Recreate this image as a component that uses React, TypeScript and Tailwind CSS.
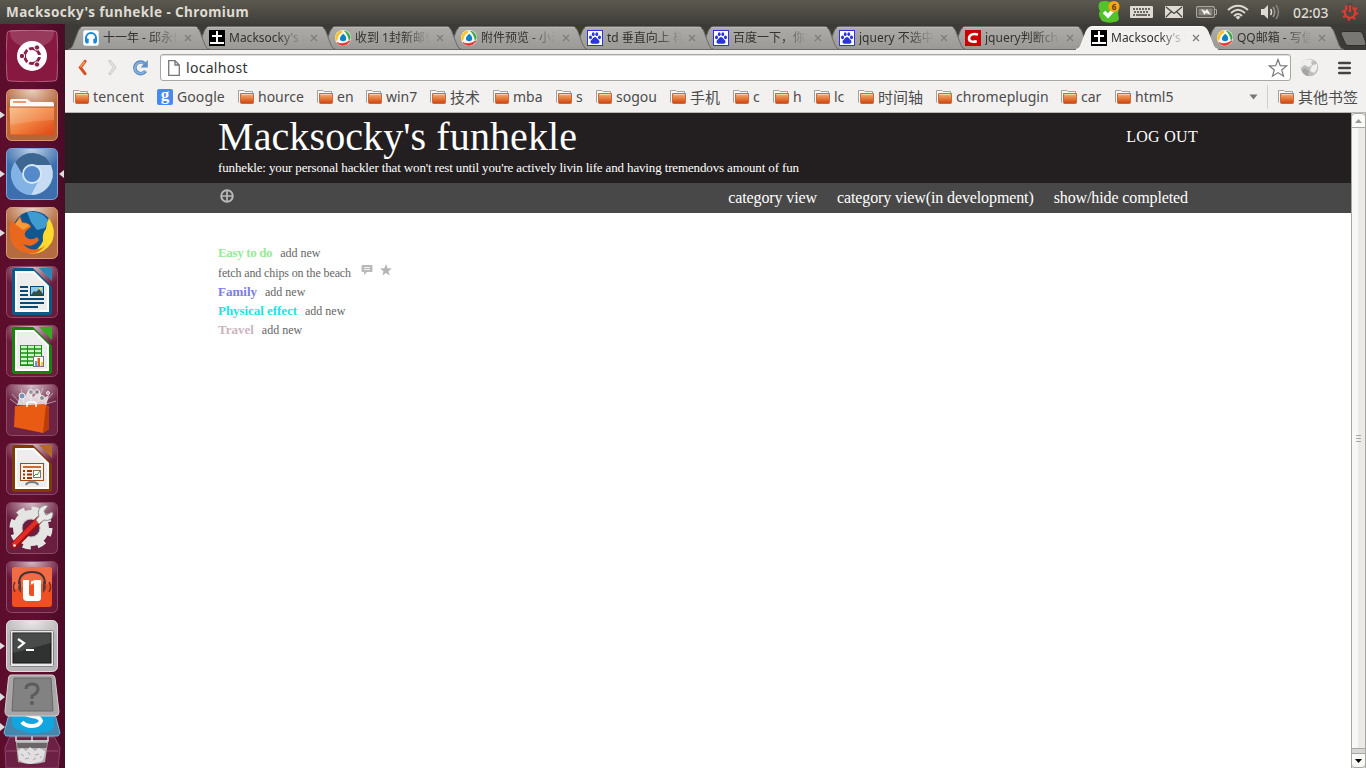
import React from "react";

const UI = "font-['Noto_Sans','Noto_Sans_CJK_SC',sans-serif]";

/* ---------- small icons ---------- */

function Headphones() {
  return (
    <svg width="16" height="16" viewBox="0 0 16 16">
      <rect x="0.5" y="0.5" width="15" height="15" rx="2" fill="#fff" stroke="#dceaf5" />
      <path d="M3 12V8a5 5 0 0 1 10 0v4" fill="none" stroke="#1c87d6" strokeWidth="2" />
      <rect x="2.5" y="8.5" width="3.2" height="5" rx="1" fill="#1c87d6" />
      <rect x="10.3" y="8.5" width="3.2" height="5" rx="1" fill="#1c87d6" />
    </svg>
  );
}
function Earth() {
  return (
    <svg width="16" height="16" viewBox="0 0 16 16">
      <rect width="16" height="16" fill="#000" />
      <path d="M7 1h2v4h4v2H9v5h6v2H1v-2h6V7H3V5h4z" fill="#fff" />
    </svg>
  );
}
function QQMail() {
  return (
    <svg width="16" height="16" viewBox="0 0 16 16">
      <circle cx="8" cy="8" r="8" fill="#f6f8f4" />
      <path d="M1 11.500A7.600 7.600 0 0 1 7.500 .5L7 3A7 7 0 0 0 2.800 9z" fill="#f7c62c" />
      <path d="M8.500 .5A7.600 7.600 0 0 1 15.500 8.500l-1.600 2.400C13.400 7 12 3.500 8.500 .5z" fill="#3aa843" />
      <path d="M2 12.500c3 1.800 8 1.600 12.800-1.700A7.500 7.500 0 0 1 2 12.500z" fill="#e5322d" stroke="#e5322d" strokeWidth=".8" />
      <path d="M8.200 3.800c2 1.500 3.300 3.500 3 5.200-.3 1.500-1.600 2.300-3.200 2.200-1.800 0-3-1-3.100-2.400 0-1.800 1.500-3.500 3.300-5z" fill="#0b82c4" />
    </svg>
  );
}
function Baidu() {
  return (
    <svg width="16" height="16" viewBox="0 0 16 16">
      <rect x=".5" y=".5" width="15" height="15" fill="#fff" stroke="#2a35dc" />
      <g fill="#2a35dc">
        <ellipse cx="3.500" cy="7.300" rx="1.500" ry="1.900" />
        <ellipse cx="6.200" cy="4.200" rx="1.400" ry="1.900" />
        <ellipse cx="9.800" cy="4.200" rx="1.400" ry="1.900" />
        <ellipse cx="12.500" cy="7.300" rx="1.500" ry="1.900" />
        <path d="M8 7c1.300 0 1.900 1.300 2.900 2.300 1.200 1.100 2 1.900 1.500 3.300-.6 1.600-2.600 1.200-4.400 1.100-1.800.1-3.800.5-4.400-1.100-.5-1.400.3-2.200 1.500-3.300C6.100 8.300 6.700 7 8 7z" />
      </g>
    </svg>
  );
}
function Csdn() {
  return (
    <svg width="16" height="16" viewBox="0 0 16 16">
      <rect width="16" height="16" fill="#cb0000" />
      <path d="M13 4.600C9 3.400 4.500 4 4 8c-.3 3.600 3.500 4.300 7.800 3.200" fill="none" stroke="#fff" strokeWidth="2.500" />
    </svg>
  );
}
function Folder() {
  return (
    <svg className="shrink-0" width="16" height="16" viewBox="0 0 16 16">
      <defs>
        <linearGradient id="fold" x1="0" y1="0" x2="0" y2="1">
          <stop offset="0" stopColor="#f3b57c" />
          <stop offset=".45" stopColor="#e58142" />
          <stop offset="1" stopColor="#d0410f" />
        </linearGradient>
      </defs>
      <path d="M.5 13.500V1.500H6l1 1h7.500V5" fill="#fafafa" stroke="#a3a19d" />
      <path d="M2.500 4.500h13v9q0 1-1 1h-11q-1 0-1-1z" fill="url(#fold)" stroke="#cd6a3a" />
      <path d="M3.500 5.500h11" stroke="#f8cfa6" />
    </svg>
  );
}
function Close() {
  return (
    <svg width="8" height="8" viewBox="0 0 8 8">
      <path d="M1 1l6 6M7 1L1 7" stroke="#7d7d7a" strokeWidth="1.300" />
    </svg>
  );
}

/* ---------- tab strip ---------- */

const tabs: { icon: () => React.JSX.Element; text: string; z: string; active?: boolean }[] = [
  { icon: Headphones, text: "十一年 - 邱永传", z: "z-10" },
  { icon: Earth, text: "Macksocky's f", z: "z-9" },
  { icon: QQMail, text: "收到 1封新邮件", z: "z-8" },
  { icon: QQMail, text: "附件预览 - 小满", z: "z-7" },
  { icon: Baidu, text: "td 垂直向上 样", z: "z-6" },
  { icon: Baidu, text: "百度一下，你就", z: "z-5" },
  { icon: Baidu, text: "jquery 不选中", z: "z-4" },
  { icon: Csdn, text: "jquery判断che", z: "z-3" },
  { icon: Earth, text: "Macksocky's f", z: "z-20", active: true },
  { icon: QQMail, text: "QQ邮箱 - 写信", z: "z-1" },
];

function Tab({ icon: Icon, text, z, active }: (typeof tabs)[number]) {
  return (
    <div className={`relative -mr-4 h-6 w-[142px] shrink-0 ${z}`}>
      <svg className="absolute inset-0" width="142" height="24" viewBox="0 0 142 24">
        <defs>
          <linearGradient id="tabFill" x1="0" y1="0" x2="0" y2="1">
            <stop offset="0" stopColor="#adaca9" />
            <stop offset="1" stopColor="#9a9996" />
          </linearGradient>
        </defs>
        <path
          d="M0 23.500C3 23 4 21 5 19L10.500 4.500Q12.500.5 16 .5H126Q129.500.5 131.500 4.500L137 19Q138.500 23 142 23.500V24H0Z"
          fill={active ? "#f2f1f0" : "url(#tabFill)"}
        />
        <path
          d="M0 23.500C3 23 4 21 5 19L10.500 4.500Q12.500.5 16 .5H126Q129.500.5 131.500 4.500L137 19Q138.500 23 142 23.500"
          fill="none"
          stroke={active ? "#fbfbfa" : "#6d6c69"}
        />
        {!active && <path d="M13 1.500H129" stroke="#bab9b6" />}
        {!active && <path d="M0 23.500H142" stroke="#6b6a66" />}
      </svg>
      <div className="relative flex h-6 items-center pl-[15px]">
        <Icon />
        <span
          className={`ml-1 h-5 w-[78px] overflow-hidden whitespace-nowrap text-[12px] leading-5 text-[#33322e] [mask-image:linear-gradient(to_right,black_62%,transparent_96%)] ${UI}`}
        >
          {text}
        </span>
        <span className="ml-[3px]">
          <Close />
        </span>
      </div>
    </div>
  );
}

/* ---------- bookmarks ---------- */

const marks: [string, string, string][] = [
  ["tencent", "w-[84px]", "tracking-[0.2px]"],
  ["Google", "w-[81px]", "tracking-[0.1px]"],
  ["hource", "w-[79px]", "tracking-normal"],
  ["en", "w-[49px]", "tracking-normal"],
  ["win7", "w-[64px]", "tracking-normal"],
  ["技术", "w-[63px]", "text-[15px]"],
  ["mba", "w-[63px]", "tracking-normal"],
  ["s", "w-[40px]", "tracking-normal"],
  ["sogou", "w-[74px]", "tracking-normal"],
  ["手机", "w-[63px]", "text-[15px]"],
  ["c", "w-[40px]", "tracking-normal"],
  ["h", "w-[41px]", "tracking-normal"],
  ["lc", "w-[44px]", "tracking-normal"],
  ["时间轴", "w-[78px]", "text-[15px]"],
  ["chromeplugin", "w-[125px]", "tracking-[0.050px]"],
  ["car", "w-[54px]", "tracking-normal"],
  ["html5", "w-[70px]", "tracking-normal"],
];

/* ---------- launcher ---------- */

function Gloss({ fill, stroke = "#ffffff55" }: { fill: string; stroke?: string }) {
  return (
    <>
      <defs>
        <radialGradient id="gloss" cx=".5" cy="0" r=".62">
          <stop offset="0" stopColor="#fff" stopOpacity=".7" />
          <stop offset="1" stopColor="#fff" stopOpacity="0" />
        </radialGradient>
      </defs>
      <rect x=".5" y=".5" width="51" height="51" rx="5" fill={fill} stroke={stroke} />
      <rect x="1" y="1" width="50" height="36" rx="5" fill="url(#gloss)" />
    </>
  );
}
function Doc({ color, dark, children }: { color: string; dark: string; children: React.ReactNode }) {
  return (
    <>
      <Gloss fill="#6b1c3c" stroke="#8d4a65" />
      <path d="M6 5q0-3 3-3H27L46 21V46q0 3-3 3H9q-3 0-3-3z" fill={dark} />
      <path d="M33 2H46V15z" fill={color} />
      <path d="M9 5H28L43 20V46H9z" fill="#fff" />
      <path d="M11 7H27L41 21V44H11z" fill="#ededed" />
      {children}
    </>
  );
}

const launcher: React.ReactNode[] = [
  <>
    <path d="M4 1Q26-1 48 1 51 1 51 4 53 26 51 48 51 51 48 51 26 53 4 51 1 51 1 48-1 26 1 4 1 1 4 1z" fill="#871840" stroke="#b85c7c" />
    <ellipse cx="26" cy="3" rx="22" ry="15" fill="#fff" opacity=".15" />
    <circle cx="26" cy="26" r="15" fill="#fff" />
    <circle cx="26" cy="26" r="7.500" fill="none" stroke="#8a2148" strokeWidth="3" />
    <path d="M26 26L36 26M26 26L20.500 16.500M26 26L20.500 35.500" stroke="#fff" strokeWidth="1.800" />
    <circle cx="26" cy="26" r="5.500" fill="#fff" />
    <g fill="#8a2148" stroke="#fff"><circle cx="16" cy="26" r="2.700" /><circle cx="31" cy="17.500" r="2.700" /><circle cx="31" cy="34.500" r="2.700" /></g>
  </>,
  <>
    <Gloss fill="#b5653a" stroke="#d99a6c" />
    <path d="M4 12q0-2 2-2H21l4 3H46q2 0 2 2v8H4z" fill="#fafafa" />
    <rect x="7" y="12" width="13" height="2" fill="#f09a6a" />
    <path d="M3 18H49L48 46H4z" fill="url(#folderBig)" stroke="#cf5a25" />
    <path d="M4 19H48V31Q25 32 4 36z" fill="#fff" opacity=".14" />
  </>,
  <>
    <Gloss fill="#3d6fae" stroke="#7ba7d8" />
    <circle cx="26" cy="26" r="21" fill="#7eaee2" />
    <path d="M9 14Q16 5 27 5q13 1 18 12H27Q18 18 17 27z" fill="#3d6791" />
    <path d="M26 17H45Q50 30 41 40 34 47 25 47L34 30z" fill="#c7dcf3" />
    <path d="M9 14L18 31Q24 36 31 34L24 47Q8 45 5 28 5 21 9 14z" fill="#83b3e5" />
    <circle cx="26" cy="26" r="9" fill="#5489ca" stroke="#d9e8f7" strokeWidth="1.800" />
  </>,
  <>
    <Gloss fill="#b46b40" stroke="#d79d76" />
    <circle cx="27" cy="24" r="20" fill="#12568f" />
    <path d="M21 5Q35 3 42 13l-3 8-8 2-6-8z" fill="#3f9bd0" />
    <path d="M43 11Q51 23 46 35 38 48 23 47 33 43 37 34 36 26 40 22 40 16 43 11z" fill="#ffda2e" />
    <path d="M5 13L9 17 14 9 16 15Q24 16 25 20L20 24Q17 28 21 31 26 34 31 30L33 33Q26 42 17 37 26 47 39 39 31 49 20 46 5 42 4 28 3 20 5 13z" fill="#e9681d" />
    <path d="M9 17L14 11 16 16Q22 16 24 19L17 23Z" fill="#f79a38" />
  </>,
  <Doc color="#2f86b5" dark="#0b5a8a">
    <path d="M14 21h8M14 25h8M14 29h8M14 33h24M14 37h24M14 41h18" stroke="#064b77" strokeWidth="2" />
    <rect x="24.500" y="20.500" width="13" height="9" fill="#8ec8ea" stroke="#064b77" />
    <path d="M25 29l3-4 2 1 3-3 4 5v1z" fill="#374d42" /><circle cx="34.500" cy="22.500" r="1.200" fill="#ffdf63" />
  </Doc>,
  <Doc color="#37a922" dark="#18830c">
    <rect x="14" y="20" width="22" height="21" fill="#188b13" />
    <path d="M15 22h20M15 26h20M15 30h20M15 34h20M15 38h20" stroke="#cdf5c5" strokeWidth="2.500" />
    <path d="M21.500 20v21M28.500 20v21" stroke="#188b13" />
    <rect x="27.500" y="31.500" width="10" height="10" fill="#fff" stroke="#76767a" />
    <path d="M29 36h2v5h-2z" fill="#44a8e8" /><path d="M31.500 33h2.500v8h-2.500z" fill="#e8581c" /><path d="M35 37h2v4h-2z" fill="#f6c42c" />
  </Doc>,
  <>
    <Gloss fill="#6e2344" stroke="#8d4a65" />
    <path d="M15 20L6 10M18 19L15 5M25 18V2M32 18L37 4M38 19L47 9M12 21L4 15M40 20L50 17" stroke="#e7d6df" opacity=".6" />
    <path d="M11 21L14 11 18 14 23 5 27 13 34 7 36 15 43 11 40 22z" fill="#fff" opacity=".75" />
    <g stroke="#efefef"><circle cx="16" cy="12" r="3" fill="#7697b5" /><circle cx="25" cy="8" r="2.500" fill="#96989d" /><circle cx="31" cy="8" r="2.500" fill="#96848f" /><circle cx="36" cy="14" r="2.500" fill="#8d9291" /><circle cx="42" cy="9" r="1.500" fill="#c6929a" /></g>
    <path d="M9 22L38 20 43 23V45L37 49 8 43z" fill="#e95a13" /><path d="M40 21L43 24V45L37 49z" fill="#ba3c0b" />
    <path d="M21 23V20q0-2 2-2h5q2 0 2 2v3" fill="none" stroke="#fff" strokeWidth="1.500" />
  </>,
  <Doc color="#b5682c" dark="#803a08">
    <rect x="14.500" y="20.500" width="23" height="17" fill="#fdf2ea" stroke="#a84713" />
    <path d="M17 24h18" stroke="#ce6a32" strokeWidth="2" /><path d="M17 28h2M17 31.500h2M17 35h2M21 28h5M21 31.500h5M21 35h5" stroke="#963909" strokeWidth="2" />
    <rect x="27.500" y="27.500" width="7" height="7" fill="#fff" stroke="#777" /><path d="M28 33l2-2 1 1 3-4" fill="none" stroke="#36982a" />
    <path d="M26 37v2M26 39q-5 0-6 3M26 39q5 0 6 3" fill="none" stroke="#777" strokeWidth="2" />
  </Doc>,
  <>
    <Gloss fill="#6b1f40" stroke="#8d4a65" />
    <circle cx="25" cy="26" r="13.500" fill="none" stroke="#e4e4e2" strokeWidth="9" />
    <circle cx="25" cy="26" r="19" fill="none" stroke="#e4e4e2" strokeWidth="5" strokeDasharray="8 6.920" />
    <circle cx="25" cy="26" r="9" fill="#6b1f40" stroke="#bdbdbd" />
    <path d="M8.500 43L33 18" stroke="#9d1111" strokeWidth="7.500" strokeLinecap="round" />
    <path d="M8.500 42L32 18" stroke="#e02d28" strokeWidth="4.500" strokeLinecap="round" />
    <path d="M30 18L33 14Q30 6 39 3L42 4 38 9 40 13 46 10 47 12Q46 20 38 18L33 22z" fill="#e9e9e7" stroke="#8f8f8f" />
    <circle cx="8.500" cy="43.500" r="1.300" fill="#fff" />
  </>,
  <>
    <Gloss fill="#68163a" stroke="#8d4a65" />
    <rect x="6" y="6" width="40" height="40" rx="3" fill="#ef5022" /><path d="M6 9q0-3 3-3h34q3 0 3 3v14Q25 22 6 29z" fill="#fff" opacity=".16" />
    <path d="M13 23Q13 11 26 11t13 12" fill="none" stroke="#473137" strokeWidth="2" />
    <path d="M15 20q-6 6 0 12zM37 20q6 6 0 12z" fill="#563d40" />
    <path d="M9 21q-3 5 0 10M43 21q3 5 0 10" fill="none" stroke="#71302a" strokeWidth="1.500" />
    <path d="M17 19h6v14q0 2 2 2h3V22l-3 1.500v-3L29 19h6v18q0 3-3 3H21q-4 0-4-4z" fill="#fff" />
  </>,
  <>
    <Gloss fill="#b9b4b7" stroke="#dedadd" />
    <rect x="4.500" y="10.500" width="43" height="36" rx="1" fill="#e9e9e9" stroke="#858585" />
    <rect x="7" y="13" width="38" height="30" fill="#303231" stroke="#111" />
    <path d="M7 13H45V23L7 33z" fill="#fff" opacity=".12" />
    <path d="M12 19l6 4-6 5" fill="none" stroke="#fff" strokeWidth="2.200" /><path d="M20 30h8" stroke="#fff" strokeWidth="2" />
  </>,
];

const arrowRows = new Set([1, 2, 3, 10]);

function Launcher() {
  return (
    <aside className="flex w-[65px] shrink-0 flex-col overflow-hidden border-r border-[#3f1229] bg-linear-to-r from-[#5c0d2b] via-[#600f30] to-[#4c0b28] pt-1.5">
      <svg width="0" height="0">
        <defs>
          <linearGradient id="folderBig" x1="0" y1="0" x2="1" y2="1">
            <stop offset="0" stopColor="#f6bb83" /><stop offset=".5" stopColor="#f0803d" /><stop offset="1" stopColor="#df4514" />
          </linearGradient>
        </defs>
      </svg>
      {launcher.map((icon, i) => (
        <div key={i} className="mb-[7px] flex h-[52px] shrink-0 items-center">
          <svg width="6" height="12" viewBox="0 0 6 12">
            {arrowRows.has(i) && <path d="M0 2.500L5 6 0 9.500z" fill="#dcdcdc" />}
          </svg>
          <svg width="52" height="52" viewBox="0 0 52 52">{icon}</svg>
          <svg className="ml-px" width="5" height="12" viewBox="0 0 5 12">
            {i === 2 && <path d="M5 2L0 6 5 10z" fill="#dcdcdc" />}
          </svg>
        </div>
      ))}
      <svg className="-mt-1.5 shrink-0" width="64" height="95" viewBox="0 673 64 95">
        <path d="M10 736H54L60 748 58 768H6L5 748z" fill="#6c2043" stroke="#8b456a" />
        <path d="M6 751H58M10 737H54" stroke="#934a6c" />
        <path d="M16 735V741H48V735M32 735V742" fill="none" stroke="#eee" strokeWidth="1.300" />
        <path d="M16 742H48L45 762Q32 766 18 762z" fill="#b4b0b2" />
        <path d="M17 743H47L46.500 748H17.500z" fill="#6a6668" />
        <path d="M18 751l4-3 4 3 4-4 5 4 4-3 6 3-1 6-2 4-7 2-5 1-5-1-6-3z" fill="#e6e4e5" opacity=".9" />
        <path d="M21 754l3 2M28 752l2 3M35 755l4-1M25 759l4-1M33 760l3-2M40 758l2-2" stroke="#a9a6a8" />
        <path d="M9 714H55L60 733 58 736H6L4 733z" fill="#4685ac" stroke="#73b4da" />
        <path d="M12 712H54V726Q52 733 43 732 35 736 20 730 12 729 12 722z" fill="#12a5df" />
        <path d="M22 722Q25 726 32 726T41 721Q40 717 32 716T22 710" fill="none" stroke="#fff" strokeWidth="4" />
        <path d="M11 675Q9 675 8.500 678L5 711Q5 716 9 716H55Q59 716 59 712L55 678Q54.500 675 52 675z" fill="#aaa6a8" stroke="#d5d1d3" />
        <path d="M14 678H51L53 711H12z" fill="#828283" stroke="#686868" />
        <path d="M26 689Q26 684 32 684T38 689Q38 693 32 696V699" fill="none" stroke="#5c5c5c" strokeWidth="3" />
        <circle cx="32" cy="703" r="2" fill="#5c5c5c" />
        <path d="M0 693L5 697 0 701zM0 723L5 727 0 731z" fill="#dcdcdc" />
      </svg>
    </aside>
  );
}

/* ---------- top panel ---------- */

function Panel() {
  return (
    <header className={`flex h-6 shrink-0 items-center bg-linear-to-b from-[#5b594f] to-[#3f3e39] pl-1.5 ${UI}`}>
      <h1 className="w-[1092px] text-[13.500px] font-bold tracking-[0.400px] text-[#dfdbd2]">Macksocky's funhekle - Chromium</h1>
      <svg width="22" height="24" viewBox="0 0 22 24">
        <path d="M2 2Q7 0 12 2 18 1 21 7L20 14Q23 22 16 22 11 24 4 21-1 15 2 11-1 6 2 2z" fill="#54c22a" />
        <path d="M6 12l4 4 7-8" fill="none" stroke="#fff" strokeWidth="3.500" />
        <circle cx="16" cy="6.500" r="5.500" fill="#f7a51b" />
        <text x="16" y="9.500" textAnchor="middle" fontSize="8" fontWeight="bold" fill="#623600">6</text>
      </svg>
      <svg className="ml-[10px]" width="23" height="12" viewBox="0 0 23 12">
        <rect width="23" height="12" rx="1" fill="#dfdbd2" />
        <path d="M3 3h17M4 6h15M3 9h2M18 9h2" stroke="#45443f" strokeWidth="1.500" strokeDasharray="2 1" /><path d="M6 9h11" stroke="#45443f" strokeWidth="1.500" />
      </svg>
      <svg className="ml-3" width="18" height="12" viewBox="0 0 18 12">
        <rect width="18" height="12" rx="1" fill="#dfdbd2" />
        <path d="M1 1l8 6.500L17 1M1 11l5.500-5.500M17 11l-5.500-5.500" fill="none" stroke="#45443f" strokeWidth="1.200" />
      </svg>
      <svg className="ml-[13px]" width="21" height="12" viewBox="0 0 21 12">
        <rect x=".6" y=".6" width="17.800" height="10.800" rx="1.500" fill="none" stroke="#aaa69d" strokeWidth="1.200" />
        <rect x="2.500" y="2.500" width="14" height="7" fill="#888580" /><path d="M19 3.500h1.500v5H19" fill="none" stroke="#aaa69d" />
        <path d="M5 3l4.500 2 1.500-2 4 6-5-2-1.500 2z" fill="#f5f1e8" />
      </svg>
      <svg className="ml-[10px]" width="22" height="16" viewBox="0 0 22 16">
        <g fill="none" stroke="#dfdbd2" strokeWidth="1.800"><path d="M1 6Q11-2.500 21 6" /><path d="M4 9Q11 2.500 18 9" /><path d="M7 12Q11 8 15 12" /></g>
        <path d="M8.500 13Q11 11 13.500 13L11 15.800z" fill="#dfdbd2" />
      </svg>
      <svg className="ml-[11px]" width="22" height="16" viewBox="0 0 22 16">
        <path d="M1 5h3l4-4v14l-4-4H1z" fill="#dfdbd2" />
        <g fill="none" strokeWidth="1.600"><path d="M10.500 5q2 3 0 6" stroke="#dfdbd2" /><path d="M13 3q3.500 5 0 10" stroke="#98958d" /><path d="M16 1q5 7 0 14" stroke="#858279" /></g>
      </svg>
      <span className="ml-[11px] w-[37px] text-[14px] font-medium tracking-[-0.100px] text-[#dfdbd2]">02:03</span>
      <svg className="ml-[11px]" width="18" height="18" viewBox="0 0 18 18">
        <circle cx="9" cy="9.500" r="5.300" fill="none" stroke="#e23a30" strokeWidth="2.300" />
        <circle cx="9" cy="9.500" r="7.300" fill="none" stroke="#e23a30" strokeWidth="2" strokeDasharray="2.300 3.430" />
        <rect x="6.700" y="0" width="4.600" height="9.500" fill="#4b4a43" /><path d="M9 2v7" stroke="#e23a30" strokeWidth="2.200" />
      </svg>
    </header>
  );
}

/* ---------- browser chrome ---------- */

function Toolbar() {
  return (
    <div className={`flex h-[34px] shrink-0 items-center bg-[#f2f1f0] pt-px pl-3 ${UI}`}>
      <svg width="10" height="17" viewBox="0 0 10 17"><path d="M8 2.300L3.300 8.500 8 14.700" fill="none" stroke="#d95020" strokeWidth="3" strokeLinecap="round" /><path d="M7.700 2.500L3.300 8" stroke="#f3975c" strokeWidth="1.500" /></svg>
      <svg className="ml-[21px]" width="10" height="17" viewBox="0 0 10 17"><path d="M2 2.300L6.700 8.500 2 14.700" fill="none" stroke="#cccbc9" strokeWidth="3" strokeLinecap="round" /><path d="M2 2.300L6.700 8.500 2 14.700" fill="none" stroke="#e4e3e1" strokeWidth="1.300" /></svg>
      <svg className="ml-[14px]" width="17" height="17" viewBox="0 0 17 17">
        <path d="M12.500 4.500A5.800 5.800 0 1 0 13.500 12" fill="none" stroke="#5388bd" strokeWidth="3.500" />
        <path d="M15.800 1V8.500H8.500z" fill="#5b92c8" /><path d="M11.500 4.500A5.500 5.500 0 1 0 13 12" fill="none" stroke="#85b2dc" strokeWidth="1.800" />
      </svg>
      <div className="ml-[11px] flex h-[27px] w-[1131px] items-center rounded-[3px] border border-[#a9a7a4] bg-white pl-[7px] shadow-[inset_0_1px_0_#ddd]">
        <svg width="12" height="16" viewBox="0 0 12 16"><path d="M.7.700H7L11.300 5V15.300H.7zM7 .7V5h4.300" fill="#fff" stroke="#777" strokeWidth="1.300" /></svg>
        <span className="ml-[6px] flex-1 text-[14px] leading-5 tracking-[0.300px] text-[#333]">localhost</span>
        <svg className="mr-0.5" width="20" height="20" viewBox="0 0 20 20"><path d="M10 1.500L12.300 7.700 18.700 7.900 13.700 12 15.500 18.200 10 14.600 4.500 18.200 6.300 12 1.300 7.900 7.700 7.700z" fill="#fff" stroke="#777" strokeWidth="1.200" /></svg>
      </div>
      <svg className="ml-[9px]" width="19" height="19" viewBox="0 0 19 19">
        <circle cx="9.500" cy="9.500" r="8.800" fill="#bdbdbc" /><path d="M5 2Q10 0 13 3L11 4 12 7 9 9 4 7 1 10Q0 5 5 2zM13 7l4-1q1 6-3 9l-4-2 1-4z" fill="#efefee" /><path d="M5 10l4 3-1 5q-5-1-6-6z" fill="#a4a4a2" />
      </svg>
      <svg className="ml-[19px]" width="13" height="14" viewBox="0 0 13 14"><path d="M1.200 2h10.600M1.200 7h10.600M1.200 12h10.600" stroke="#444341" strokeWidth="2.600" strokeLinecap="round" /></svg>
    </div>
  );
}

function Bookmarks() {
  return (
    <div className={`flex h-[29px] shrink-0 items-center border-b border-[#b8b6b3] bg-[#f2f1f0] pb-0.5 pl-2 text-[14px] leading-5 text-[#4c4c4c] ${UI}`}>
      {marks.map(([name, width, tracking]) => (
        <div key={name} className={`flex shrink-0 items-center gap-1 ${width}`}>
          {name === "Google" ? (
            <span className="flex size-4 shrink-0 items-center justify-center rounded-[2px] bg-[#4788f4] pb-1 font-['Liberation_Serif',serif] text-[17px] leading-4 font-bold text-white">g</span>
          ) : (
            <Folder />
          )}
          <span className={tracking}>{name}</span>
        </div>
      ))}
      <svg className="ml-[64px] shrink-0" width="9" height="6" viewBox="0 0 9 6"><path d="M.5.5h8L4.500 5.500z" fill="#777" /></svg>
      <div className="ml-[9px] h-6 w-px shrink-0 bg-[#d2d0cd]" />
      <div className="ml-[10px] flex shrink-0 items-center gap-1"><Folder /><span className="text-[15px]">其他书签</span></div>
    </div>
  );
}

/* ---------- web page ---------- */

const groups = [
  { name: "Easy to do", color: "text-[#98ea98] tracking-[-0.360px]", items: ["fetch and chips on the beach"] },
  { name: "Family", color: "text-[#7b7bea]", items: [] },
  { name: "Physical effect", color: "text-[#20e3e3] tracking-[-0.050px]", items: [] },
  { name: "Travel", color: "text-[#ccb4c0]", items: [] },
];

function Page() {
  return (
    <main className="min-w-0 flex-1 bg-white font-['Liberation_Serif',serif]">
      <div className="flex h-[70px] justify-between bg-[#231f20] pr-[153px] pl-[153px] text-white">
        <div>
          <h2 className="h-[46px] text-[40px] leading-[47px] tracking-[0.100px] whitespace-nowrap">Macksocky's funhekle</h2>
          <p className="text-[13px] leading-[18px] tracking-[-0.140px] whitespace-nowrap">funhekle: your personal hackler that won't rest until you're actively livin life and having tremendovs amount of fun</p>
        </div>
        <a className="pt-3 text-[16px] leading-6 tracking-[0.300px]">LOG OUT</a>
      </div>
      <nav className="flex h-[30px] items-center bg-[#484848] pr-[163px] pl-[155px] text-[16px] text-white">
        <svg className="mb-1" width="14" height="14" viewBox="0 0 14 14"><circle cx="7" cy="7" r="5.800" fill="none" stroke="#bbb" strokeWidth="1.900" /><path d="M7 1v12M1 7h12" stroke="#bbb" strokeWidth="1.700" /></svg>
        <div className="ml-auto flex gap-5 tracking-[-0.110px]"><a>category view</a><a>category view(in development)</a><a>show/hide completed</a></div>
      </nav>
      <div className="pt-[30px] pl-[153px] text-[12px] text-[#666]">
        {groups.map((g) => (
          <section key={g.name}>
            <div className="flex h-[19px] items-center gap-2"><b className={`text-[13px] ${g.color}`}>{g.name}</b><span>add new</span></div>
            {g.items.map((t) => (
              <div key={t} className="flex h-5 items-center">
                <span className="pt-0.5 tracking-[-0.120px]">{t}</span>
                <svg className="mb-1 ml-[10px]" width="12" height="12" viewBox="0 0 12 12"><path d="M1.500 1h9q1 0 1 1v5q0 1-1 1H6l-3 3V8H1.500q-1 0-1-1V2q0-1 1-1z" fill="#bababa" /><path d="M3 3.500h6M3 5.500h6" stroke="#fff" strokeWidth=".8" /></svg>
                <svg className="mb-1 ml-[7px]" width="12" height="12" viewBox="0 0 12 12"><path d="M6 0l1.600 4.200 4.400.2-3.500 2.800L9.700 11.500 6 9 2.300 11.500l1.200-4.300L0 4.400l4.400-.2z" fill="#b5b5b5" /></svg>
              </div>
            ))}
          </section>
        ))}
      </div>
    </main>
  );
}

function Scrollbar() {
  return (
    <div className="flex w-[15px] shrink-0 flex-col border-x border-[#a9a7a4] bg-[#d8d7d5]">
      <div className="flex h-[15px] items-center justify-center rounded-t border-y border-[#a9a7a4] bg-[#fafaf9]"><svg width="7" height="4" viewBox="0 0 7 4"><path d="M0 4L3.500 0 7 4z" fill="#999" /></svg></div>
      <div className="flex flex-1 items-center justify-center bg-linear-to-r from-[#f8f8f7] from-50% to-[#ebeae8] to-50%">
        <svg className="mt-0.5" width="5" height="8" viewBox="0 0 5 8"><path d="M0 .5h5M0 3.500h5M0 6.500h5" stroke="#a9a7a4" /></svg>
      </div>
      <div className="h-[6px] border-y border-[#a9a7a4]" />
      <div className="flex h-[14px] items-center justify-center rounded-b border-b border-[#a9a7a4] bg-[#fafaf9]"><svg width="7" height="4" viewBox="0 0 7 4"><path d="M0 0h7L3.500 4z" fill="#000" /></svg></div>
    </div>
  );
}

export default function App() {
  return (
    <div className="flex h-[768px] w-[1366px] flex-col overflow-hidden bg-[#3c3b37]">
      <Panel />
      <div className="flex min-h-0 flex-1">
        <Launcher />
        <div className="flex min-w-0 flex-1 flex-col">
          <div className="flex h-[26px] shrink-0 items-end bg-[#3c3b37] pl-[3px]">
            <div className="isolate flex h-6">{tabs.map((t, i) => <Tab key={i} {...t} />)}</div>
            <svg className="mb-[4px] ml-3 shrink-0" width="27" height="15" viewBox="0 0 27 15"><path d="M3 .5H20q2 0 3 3L26 12q.500 2.500-2 2.500H8q-2 0-3-2.500L1 3Q.500.500 3 .500z" fill="#787774" stroke="#2e2d2a" /></svg>
          </div>
          <Toolbar />
          <Bookmarks />
          <div className="flex min-h-0 flex-1"><Page /><Scrollbar /></div>
        </div>
      </div>
    </div>
  );
}
